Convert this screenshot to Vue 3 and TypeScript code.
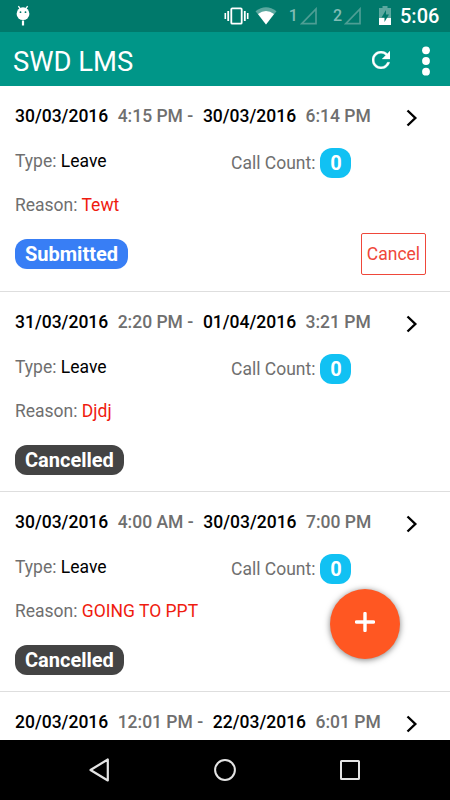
<script setup lang="ts">
interface LeaveRequest {
  fromDate: string
  fromTime: string
  toDate: string
  toTime: string
  type: string
  calls: number
  reason: string
  status: 'Submitted' | 'Cancelled'
}

const requests: LeaveRequest[] = [
  { fromDate: '30/03/2016', fromTime: '4:15 PM', toDate: '30/03/2016', toTime: '6:14 PM', type: 'Leave', calls: 0, reason: 'Tewt', status: 'Submitted' },
  { fromDate: '31/03/2016', fromTime: '2:20 PM', toDate: '01/04/2016', toTime: '3:21 PM', type: 'Leave', calls: 0, reason: 'Djdj', status: 'Cancelled' },
  { fromDate: '30/03/2016', fromTime: '4:00 AM', toDate: '30/03/2016', toTime: '7:00 PM', type: 'Leave', calls: 0, reason: 'GOING TO PPT', status: 'Cancelled' },
]

const next = { fromDate: '20/03/2016', fromTime: '12:01 PM', toDate: '22/03/2016', toTime: '6:01 PM' }
</script>

<template>
  <div class="screen">
    <div class="status-bar">
      <svg class="debug" width="16" height="22" viewBox="0 0 16 22">
        <path d="M3.4 1.2l2 3M12.6 1.2l-2 3" stroke="#fff" stroke-width="1.3" />
        <circle cx="8" cy="8.7" r="6.4" fill="#fff" />
        <circle cx="5.5" cy="7.2" r=".9" fill="#00796b" />
        <circle cx="10.5" cy="7.2" r=".9" fill="#00796b" />
        <path d="M8 15.5v5" stroke="#fff" stroke-width="2.2" />
      </svg>
      <div class="status-icons">
        <svg class="vibrate" width="25" height="18" viewBox="0 0 25 18" fill="none" stroke="#fff">
          <rect x="7.3" y="1.3" width="10.4" height="15.4" rx="1" stroke-width="1.8" />
          <path d="M4.2 4v10M20.8 4v10" stroke-width="1.8" />
          <path d="M1.3 6v6M23.7 6v6" stroke-width="1.6" />
        </svg>
        <svg class="wifi" width="22" height="18" viewBox="0 0 22 18">
          <path d="M.5 4.2Q11-3.6 21.5 4.2L11 17.5z" fill="#5ba89f" />
          <path d="M3 7Q11 1.200 19 7L11 17.5z" fill="#fff" />
        </svg>
        <span class="sim sim-one">1</span>
        <svg class="signal" width="18" height="18" viewBox="0 0 18 18"><path d="M1.800 16.7L16 2V16.7z" fill="none" stroke="#4d9e94" stroke-width="1.7" /></svg>
        <span class="sim sim-two">2</span>
        <svg class="signal" width="18" height="18" viewBox="0 0 18 18"><path d="M1.800 16.7L16 2V16.7z" fill="none" stroke="#4d9e94" stroke-width="1.7" /></svg>
        <svg class="battery" width="12" height="19" viewBox="0 0 12 19">
          <path d="M3.5 0h5v2H12v10H0V2h3.5z" fill="#5ba89f" />
          <path d="M0 12h12v7H0z" fill="#fff" />
          <path d="M7 4L2.5 11.5h3V16L10 8.5H7z" fill="#00796b" />
        </svg>
        <span class="clock">5:06</span>
      </div>
    </div>

    <header class="toolbar">
      <h1>SWD LMS</h1>
      <svg class="refresh" width="18" height="18" viewBox="4 4 16 16">
        <path fill="#fff" stroke="#fff" stroke-width=".3" d="M17.65 6.35C16.2 4.9 14.21 4 12 4c-4.42 0-7.99 3.58-7.99 8s3.57 8 7.99 8c3.73 0 6.84-2.55 7.73-6h-2.08c-.82 2.33-3.04 4-5.65 4-3.31 0-6-2.69-6-6s2.69-6 6-6c1.66 0 3.14.69 4.22 1.78L13 11h7V4l-2.35 2.35z" />
      </svg>
      <svg class="more" width="8" height="30" viewBox="0 0 8 30" fill="#fff">
        <circle cx="4" cy="4.3" r="3.9" /><circle cx="4" cy="15" r="3.9" /><circle cx="4" cy="25.7" r="3.9" />
      </svg>
    </header>

    <main class="list">
      <article v-for="(r, i) in requests" :key="i" class="item" :class="r.status.toLowerCase()">
        <div class="period">
          <b>{{ r.fromDate }}</b><span class="time">{{ r.fromTime }} -</span><b class="to">{{ r.toDate }}</b><span class="time">{{ r.toTime }}</span>
          <svg class="chevron" width="12" height="18" viewBox="0 0 12 18"><path d="M1.5 1.5L9.3 9l-7.8 7.5" fill="none" stroke="#000" stroke-width="2.4" /></svg>
        </div>
        <div class="details">
          <div class="type">Type: <span class="value">{{ r.type }}</span></div>
          <div class="calls">Call Count: <span class="count">{{ r.calls }}</span></div>
        </div>
        <div class="reason">Reason: <span class="why">{{ r.reason }}</span></div>
        <div class="footer">
          <span class="badge">{{ r.status }}</span>
          <button v-if="r.status === 'Submitted'" class="cancel">Cancel</button>
        </div>
      </article>
      <article class="item">
        <div class="period">
          <b>{{ next.fromDate }}</b><span class="time">{{ next.fromTime }} -</span><b class="to">{{ next.toDate }}</b><span class="time">{{ next.toTime }}</span>
          <svg class="chevron" width="12" height="18" viewBox="0 0 12 18"><path d="M1.5 1.5L9.3 9l-7.8 7.5" fill="none" stroke="#000" stroke-width="2.4" /></svg>
        </div>
      </article>
    </main>

    <button class="fab" aria-label="Add">
      <svg width="20" height="20" viewBox="0 0 20 20"><path d="M10 1.5v17M1.5 10h17" stroke="#fff" stroke-width="3.4" stroke-linecap="round" /></svg>
    </button>

    <nav class="nav-bar">
      <svg width="22" height="26" viewBox="0 0 22 26"><path d="M2.5 13L19.8 2.500v21z" fill="none" stroke="#e4e4e4" stroke-width="2.200" stroke-linejoin="round" /></svg>
      <svg width="22" height="22" viewBox="0 0 22 22"><circle cx="11" cy="11" r="9.9" fill="none" stroke="#e4e4e4" stroke-width="2" /></svg>
      <svg width="20" height="20" viewBox="0 0 20 20"><rect x="1" y="1" width="18" height="18" rx=".5" fill="none" stroke="#e4e4e4" stroke-width="2" /></svg>
    </nav>
  </div>
</template>

<style>
body {
  margin: 0;
  background: #fff;
}
</style>

<style scoped>
.screen {
  position: relative;
  display: flex;
  flex-direction: column;
  width: 450px;
  height: 800px;
  overflow: hidden;
  background: #fff;
  font-family: Roboto, sans-serif;
}
.status-bar {
  display: flex;
  flex: none;
  align-items: center;
  justify-content: space-between;
  box-sizing: border-box;
  height: 32px;
  padding: 0 10px 0 15px;
  background: #00796b;
}
.status-icons {
  display: flex;
  align-items: center;
  color: #fff;
}
.wifi { margin-left: 6px; }
.sim {
  color: #80bcb5;
  font-size: 16px;
  font-weight: 500;
  line-height: 32px;
}
.sim-one { margin-left: 12px; }
.sim-two { margin-left: 15px; }
.signal { margin: 0 0 1px 2px; }
.battery { margin: 0 0 1px 17px; }
.clock {
  width: 40px;
  margin-left: 9px;
  font-size: 20px;
  font-weight: 500;
  line-height: 32px;
  white-space: nowrap;
}
.toolbar {
  display: flex;
  flex: none;
  align-items: center;
  box-sizing: border-box;
  height: 54px;
  padding: 4px 20px 0 13px;
  background: #009688;
}
h1 {
  flex: 1;
  margin: 0;
  padding-top: 2px;
  color: #fff;
  font-size: 27.4px;
  font-weight: 400;
  line-height: 48px;
}
.refresh { margin: 0 32px 2px 0; }
.list {
  flex: 1;
  min-height: 0;
  overflow: hidden;
}
.item {
  box-sizing: border-box;
  height: 200px;
  padding: 19px 24px 0 15px;
  border-bottom: 1px solid #dedede;
  color: #6f6f6f;
  font-size: 17.5px;
  line-height: 22px;
}
.item.submitted { height: 206px; }
.period {
  display: flex;
  height: 22px;
  font-weight: 500;
  white-space: pre;
}
.period b {
  color: #000;
  font-weight: 500;
}
.time { margin-left: 9.4px; }
.to { margin-left: 9.7px; }
.chevron {
  margin: 4px 8px 0 auto;
}
.details {
  display: flex;
  height: 30px;
  margin-top: 21px;
}
.type {
  width: 216px;
  padding-top: 2px;
}
.calls {
  display: flex;
  gap: 5px;
  line-height: 31px;
}
.value { color: #000; }
.count {
  width: 31px;
  height: 30px;
  border-radius: 12px;
  background: #11c1f3;
  color: #fff;
  font-size: 20px;
  font-weight: 700;
  line-height: 30px;
  text-align: center;
}
.reason {
  margin-top: 16px;
}
.why { color: #ef1b0f; }
.footer {
  display: flex;
  align-items: flex-start;
  justify-content: space-between;
  margin-top: 17px;
}
.badge {
  margin-top: 6px;
  padding: 0 10px;
  border-radius: 12px;
  background: #444;
  color: #fff;
  font-size: 20px;
  font-weight: 700;
  line-height: 30px;
}
.submitted .badge { background: #387ef5; }
.cancel {
  box-sizing: border-box;
  width: 65px;
  height: 42px;
  padding: 0;
  border: 1px solid #ef473a;
  border-radius: 2px;
  background: transparent;
  color: #ef473a;
  font: 400 17.5px/38px Roboto, sans-serif;
}
.fab {
  position: absolute;
  right: 50px;
  bottom: 141px;
  display: flex;
  align-items: center;
  justify-content: center;
  width: 70px;
  height: 70px;
  padding: 0 0 4px;
  border: 0;
  border-radius: 50%;
  background: #ff5722;
  box-shadow: 0 1px 6px rgba(0, 0, 0, 0.5);
}
.nav-bar {
  display: flex;
  flex: none;
  align-items: center;
  justify-content: space-between;
  box-sizing: border-box;
  height: 60px;
  padding: 0 90px 0 88px;
  background: #000;
}
</style>
